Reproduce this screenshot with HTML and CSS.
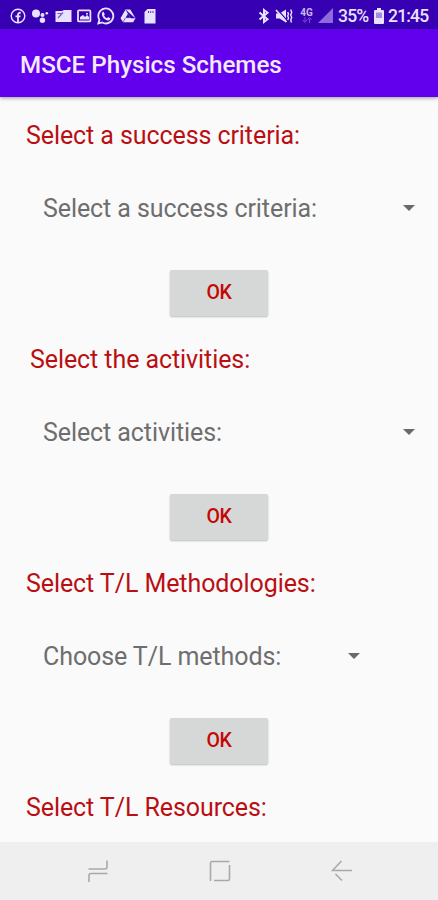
FILE: index.html
```html
<!doctype html>
<html lang="en">
<head>
  <meta charset="utf-8">
  <title>MSCE Physics Schemes</title>
  <link rel="stylesheet" href="styles.css">
</head>
<body>
  <div class="status-bar">
    <div class="notifications">
      <svg width="16" height="16" viewBox="0 0 16 16">
        <circle cx="8" cy="8" r="6.8" fill="none" stroke="#e9e2ff" stroke-width="1.4" />
        <path d="M8 14V7Q8 4.5 10.8 4.8M5.5 8.3H10.5" fill="none" stroke="#e9e2ff" stroke-width="1.8" />
      </svg>
      <svg width="18" height="16" viewBox="0 0 18 16">
        <circle cx="5" cy="5.5" r="4" />
        <circle cx="11.5" cy="7" r="2" />
        <circle cx="15.8" cy="5.2" r="1.3" />
        <circle cx="11.4" cy="12.2" r="2.7" />
      </svg>
      <svg width="17" height="16" viewBox="0 0 17 16">
        <path d="M.5 3H7L9 2H16.5V14H.5Z" />
        <path d="M2.5 5.5H6M3 10L8 4.5" fill="none" stroke="#7652cf" stroke-width="1.2" />
      </svg>
      <svg width="15" height="16" viewBox="0 0 15 16">
        <rect x="1" y="2.4" width="12.4" height="11" rx="1" fill="none" stroke="#e9e2ff" stroke-width="1.8" />
        <path d="M3 11.5V9L6 7L8 9L10 7L12 9V11.5Z" />
        <circle cx="10" cy="5.7" r="1" />
      </svg>
      <svg width="18" height="18" viewBox="0 0 18 18">
        <path d="M1.3 16.5L2.4 12.8A7.5 7.5 0 1 1 5.2 15.5Z" fill="none" stroke="#e9e2ff" stroke-width="1.8" />
        <path d="M6.3 4.5L7.8 7.2L7 8.5Q8 10.5 10 11.2L11.2 10L13.5 11.5Q12.8 13.8 10.5 13.4Q5.5 12 4.8 7.2Q4.8 5 6.3 4.5Z" />
      </svg>
      <svg width="16" height="16" viewBox="0 0 16 16">
        <path d="M5.5 1.5H10.3L15.5 10.2L13.1 14.3H3L.5 10.2Z" />
        <path d="M8 6.2L6 9.6H10ZM6 2L10.8 10H15M5.5 10L3 14" fill="#3700b3" stroke="#3700b3" stroke-width=".6" />
      </svg>
      <svg class="sd-card" width="12" height="16" viewBox="0 0 12 16">
        <path d="M3.5 1H11.5V15.5H.5V4Z" />
        <path d="M4.5 3V5M6.7 3V5M9 3V5" stroke="#3700b3" stroke-width=".8" />
      </svg>
    </div>
    <div class="system">
      <svg width="12" height="16" viewBox="0 0 12 16">
        <path d="M1.5 4.5L9.5 11.3L6 14V2L9.5 4.7L1.5 11.5" fill="none" stroke="#e9e2ff" stroke-width="2" />
      </svg>
      <svg class="mute" width="18" height="16" viewBox="0 0 18 16">
        <path d="M1 5.5H4.5L11 1.5V14.5L4.5 10.5H1Z" />
        <path d="M2 1L12 12.5" stroke="#3700b3" stroke-width="1.2" />
        <path d="M1 2L11.5 14" fill="none" stroke="#e9e2ff" stroke-width="1.7" />
        <path d="M12.7 4L13.5 6L12.7 8L13.5 10L12.7 12M15.7 1.5L16.7 4.5L15.7 7L16.7 9.5L15.7 12L16.5 14.5" fill="none" stroke="#e9e2ff" stroke-width="1.4" />
      </svg>
      <div class="network">
        <span>4G</span>
        <svg width="10" height="6" viewBox="0 0 10 6">
          <path d="M3 0V4M1 3L3 5.5L5 3M7.5 6V2M5.5 3L7.5 .5L9.5 3" fill="none" stroke="#7450cf" stroke-width="1" />
        </svg>
      </div>
      <svg class="signal" width="15" height="15" viewBox="0 0 15 15">
        <path d="M15 0V15H0Z" />
      </svg>
      <span class="percent">35%</span>
      <svg class="battery" width="10" height="16" viewBox="0 0 10 16">
        <path d="M3 0H7V2H9Q10 2 10 3V15Q10 16 9 16H1Q0 16 0 15V3Q0 2 1 2H3Z" />
        <path d="M2 4.5H8V10H2Z" fill="#a58ade" />
      </svg>
      <span class="clock">21:45</span>
    </div>
  </div>
  <div class="app-bar">MSCE Physics Schemes</div>
  <div class="content">
    <div class="section">
      <div class="label">Select a success criteria:</div>
      <div class="spinner"><span>Select a success criteria:</span><i class="arrow"></i></div>
      <button>OK</button>
    </div>
    <div class="section">
      <div class="label activities">Select the activities:</div>
      <div class="spinner"><span>Select activities:</span><i class="arrow"></i></div>
      <button>OK</button>
    </div>
    <div class="section">
      <div class="label">Select T/L Methodologies:</div>
      <div class="spinner narrow"><span>Choose T/L methods:</span><i class="arrow"></i></div>
      <button>OK</button>
    </div>
    <div class="section">
      <div class="label">Select T/L Resources:</div>
    </div>
  </div>
  <div class="nav-bar">
    <svg width="22" height="22" viewBox="0 0 22 22">
      <path d="M1.5 9H18Q20 9 20 7V.5M20.5 13.5H4Q2 13.5 2 15.5V22" />
    </svg>
    <svg width="22" height="22" viewBox="0 0 22 22">
      <path d="M1.5 21V3Q1.5 1.5 3 1.5H20.5M20.5 5V19Q20.5 20.5 19 20.5H5" />
    </svg>
    <svg width="22" height="22" viewBox="0 0 22 22">
      <path d="M10.5 1L1.5 10.5H21M4.5 14L11 20.5" />
    </svg>
  </div>
</body>
</html>
```
FILE: styles.css
```css
html, body {
  margin: 0;
  padding: 0;
  height: 100%;
  overflow: hidden;
}
body {
  display: flex;
  flex-flow: column nowrap;
  background: #fafafa;
  font-family: Roboto, sans-serif;
}
svg {
  display: block;
  flex: none;
}
.status-bar {
  flex: none;
  display: flex;
  justify-content: space-between;
  align-items: center;
  height: 29px;
  padding: 2px 9px 0 10px;
  box-sizing: border-box;
  background: #3700b3;
  color: #e9e2ff;
  fill: #e9e2ff;
}
.notifications {
  display: flex;
  align-items: center;
  gap: 5.3px;
}
.sd-card {
  margin-left: 2px;
}
.system {
  display: flex;
  align-items: center;
  white-space: nowrap;
}
.mute {
  margin-left: 5px;
}
.network {
  display: flex;
  flex-flow: column nowrap;
  align-items: center;
  width: 13px;
  margin-left: 7px;
  color: #c9b8f0;
  font-size: 10px;
  font-weight: bold;
  line-height: 8px;
}
.signal {
  margin-left: 5px;
  fill: #8e6bdc;
}
.percent {
  width: 32px;
  margin-left: 5px;
}
.battery {
  margin-left: 4px;
}
.clock {
  width: 41px;
  margin-left: 4px;
}
.percent, .clock {
  font-size: 17.5px;
  font-weight: 500;
  letter-spacing: -0.8px;
}
.app-bar {
  flex: none;
  z-index: 1;
  height: 68px;
  padding-left: 20px;
  line-height: 73px;
  background: #6200ee;
  color: #f3eaff;
  font-size: 24.2px;
  font-weight: 500;
  box-shadow: 0 1px 4px rgba(0, 0, 0, 0.4);
}
.content {
  flex: auto;
  min-height: 0;
  overflow: hidden;
  padding-top: 1px;
}
.section {
  display: flex;
  flex-flow: column nowrap;
  align-items: flex-start;
}
.label {
  padding-left: 26px;
  height: 74px;
  line-height: 76px;
  color: #b90f12;
  font-size: 25px;
  letter-spacing: -0.08px;
  white-space: nowrap;
}
.activities {
  padding-left: 30px;
}
.spinner {
  display: flex;
  justify-content: space-between;
  align-items: center;
  width: 372px;
  height: 72px;
  padding-left: 43px;
  color: #6e6e6e;
  font-size: 25px;
  letter-spacing: -0.08px;
  white-space: nowrap;
}
.spinner.narrow {
  width: 317px;
}
.arrow {
  border: 6px solid transparent;
  border-top-color: #696969;
  border-bottom: none;
}
button {
  width: 98px;
  height: 46px;
  margin: 26px 0 6px 170px;
  padding: 0 0 2px;
  border: none;
  border-radius: 2px;
  background: #d6d8d7;
  box-shadow: 0 1px 2px rgba(0, 0, 0, 0.25);
  color: #c40808;
  font-family: inherit;
  font-size: 19.5px;
  font-weight: 500;
  letter-spacing: -0.3px;
}
.nav-bar {
  flex: none;
  display: flex;
  justify-content: center;
  align-items: center;
  gap: 100px;
  height: 58px;
  padding-left: 1px;
  background: #efefef;
}
.nav-bar path {
  fill: none;
  stroke: #a9a9a9;
  stroke-width: 1.6;
}
```
